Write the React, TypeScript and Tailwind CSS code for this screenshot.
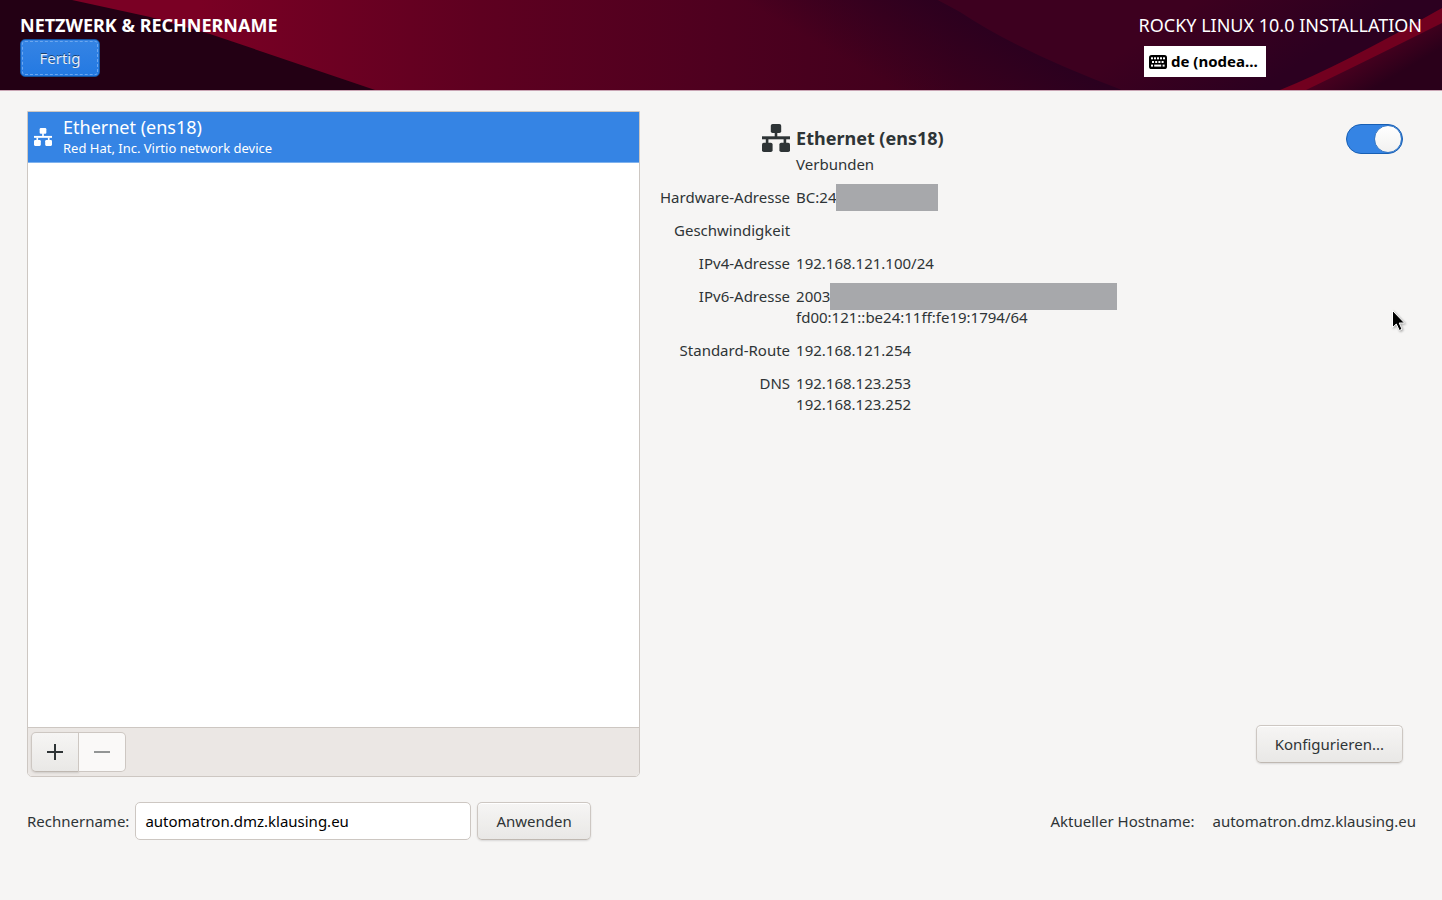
import { useState } from "react";

const buttonLook =
  "h-[38px] rounded-[5px] border border-[#cdc7c2] border-b-[#bfb8b1] bg-gradient-to-b from-[#f6f5f4] to-[#e9e8e6] px-[18px] shadow-[inset_0_1px_0_white,0_1px_2px_rgba(0,0,0,0.12)]";

function WiredIcon({ className }: { className: string }) {
  return (
    <svg viewBox="0 0 28 28" fill="currentColor" className={className} aria-hidden="true">
      <rect x="8.8" y="0" width="10.4" height="9" rx="1.8" />
      <rect x="12.7" y="8" width="2.6" height="6" />
      <rect x="0" y="12.3" width="28" height="3" />
      <rect x="3.8" y="15" width="2.6" height="5" />
      <rect x="21.6" y="15" width="2.6" height="5" />
      <rect x="0" y="18.8" width="10.6" height="9.2" rx="1.8" />
      <rect x="17.4" y="18.8" width="10.6" height="9.2" rx="1.8" />
    </svg>
  );
}

function KeyboardIcon() {
  return (
    <svg viewBox="0 0 18 14" className="h-[14px] w-[18px] shrink-0" aria-hidden="true">
      <rect width="18" height="14" rx="2.6" fill="#000" />
      <g fill="#fff">
        <rect x="2" y="2.3" width="2" height="2" />
        <rect x="5" y="2.3" width="2" height="2" />
        <rect x="8" y="2.3" width="2" height="2" />
        <rect x="11" y="2.3" width="2" height="2" />
        <rect x="14" y="2.3" width="2" height="2" />
        <rect x="3" y="6" width="2" height="2" />
        <rect x="6.2" y="6" width="2" height="2" />
        <rect x="9.4" y="6" width="2" height="2" />
        <rect x="12.6" y="6" width="2" height="2" />
        <rect x="2" y="9.6" width="2" height="2" />
        <rect x="5.2" y="9.6" width="7" height="2" />
        <rect x="13.6" y="9.6" width="2" height="2" />
      </g>
    </svg>
  );
}

function HeaderArt() {
  return (
    <svg
      viewBox="0 0 1442 90"
      preserveAspectRatio="none"
      className="absolute inset-0 h-full w-full"
      aria-hidden="true"
    >
      <defs>
        <linearGradient id="base" gradientUnits="userSpaceOnUse" x1="200" y1="0" x2="960" y2="0">
          <stop offset="0" stopColor="#7a0024" />
          <stop offset="0.37" stopColor="#5e0020" />
          <stop offset="0.7" stopColor="#4d001f" />
          <stop offset="1" stopColor="#3e001c" />
        </linearGradient>
        <linearGradient id="shade" gradientUnits="userSpaceOnUse" x1="880" y1="80" x2="935" y2="-15">
          <stop offset="0" stopColor="#2a001f" stopOpacity="0" />
          <stop offset="1" stopColor="#2a001f" />
        </linearGradient>
        <linearGradient id="fold" gradientUnits="userSpaceOnUse" x1="1200" y1="0" x2="1260" y2="90">
          <stop offset="0" stopColor="#3d001f" />
          <stop offset="1" stopColor="#2c0020" />
        </linearGradient>
        <linearGradient id="dark" gradientUnits="userSpaceOnUse" x1="1370" y1="50" x2="1400" y2="100">
          <stop offset="0" stopColor="#4a001f" />
          <stop offset="0.6" stopColor="#2a001a" />
        </linearGradient>
      </defs>
      <rect width="1442" height="90" fill="url(#base)" />
      <path d="M700 0H938L1122 90H760Z" fill="url(#shade)" />
      <path d="M938 0H1442V90H1122Q1020 52 960 12Z" fill="url(#fold)" />
      <path d="M0 0H72L150 17L210 34L375 90H0Z" fill="#230014" />
      <path d="M1280 90Q1340 66 1442 8V90Z" fill="#72001f" />
      <path d="M1306 90Q1360 64 1442 23V90Z" fill="url(#dark)" />
    </svg>
  );
}

const details: { label: string; lines: { text: string; mask?: string }[] }[] = [
  { label: "Hardware-Adresse", lines: [{ text: "BC:24", mask: "w-[102px]" }] },
  { label: "Geschwindigkeit", lines: [] },
  { label: "IPv4-Adresse", lines: [{ text: "192.168.121.100/24" }] },
  {
    label: "IPv6-Adresse",
    lines: [
      { text: "2003", mask: "w-[287px]" },
      { text: "fd00:121::be24:11ff:fe19:1794/64" },
    ],
  },
  { label: "Standard-Route", lines: [{ text: "192.168.121.254" }] },
  { label: "DNS", lines: [{ text: "192.168.123.253" }, { text: "192.168.123.252" }] },
];

export default function App() {
  const [on, setOn] = useState(true);
  const [host, setHost] = useState("automatron.dmz.klausing.eu");

  return (
    <div className="relative flex min-h-screen flex-col bg-[#f6f5f4] font-['Noto_Sans',sans-serif] text-[15px] leading-[21px] text-[#2e3436]">
      <header className="relative flex items-start justify-between border-b border-[#c9a5b4] px-5 pt-3 pb-[13px] text-white">
        <HeaderArt />
        <div className="relative">
          <h1 className="text-[18px] leading-[27px] font-bold">NETZWERK &amp; RECHNERNAME</h1>
          <button className="flex h-[38px] w-20 rounded-[5px] border border-[#15539e] bg-gradient-to-b from-[#3584e4] to-[#2379e2] p-px text-shadow-[0_-1px_0_rgba(0,0,0,0.5)]">
            <span className="flex h-full w-full items-center justify-center rounded-[3px] border border-dashed border-[#6ba6ee] text-[#e3edf9]">
              Fertig
            </span>
          </button>
        </div>
        <div className="relative flex w-[278px] flex-col items-start gap-[7px]">
          <span className="self-end text-[18px] leading-[27px] whitespace-nowrap">
            ROCKY LINUX 10.0 INSTALLATION
          </span>
          <button className="flex h-[31px] w-[122px] items-center gap-1 bg-white pr-2 pl-[5px] font-bold text-black">
            <KeyboardIcon />
            de (nodea…
          </button>
        </div>
      </header>

      <main className="flex flex-1 flex-col pt-5 pr-[26px] pb-[60px] pl-[27px]">
        <div className="grid flex-1 grid-cols-[613fr_776fr]">
          <section className="flex flex-col overflow-hidden rounded-b-[5px] border border-[#cdc7c2] bg-white">
            <ul className="flex-1">
              <li className="flex h-[51px] items-center gap-[11px] border-b border-[#7fb2ee] bg-[#3584e4] pl-[6px] text-white">
                <WiredIcon className="h-[18px] w-[18px]" />
                <div>
                  <div className="text-[18px] leading-[23px]">Ethernet (ens18)</div>
                  <div className="text-[13px] leading-[19px]">Red Hat, Inc. Virtio network device</div>
                </div>
              </li>
            </ul>
            <div className="flex h-[49px] items-start border-t border-[#cdc7c2] bg-[#ebe7e4] px-[3px] pt-1">
              <button
                aria-label="Hinzufügen"
                className="flex h-10 w-12 items-center justify-center rounded-l-[5px] border border-[#cdc7c2] border-b-[#bfb8b1] bg-gradient-to-b from-[#f6f5f4] to-[#e9e8e6] shadow-[0_1px_2px_rgba(0,0,0,0.12)]"
              >
                <svg viewBox="0 0 16 16" className="h-4 w-4" aria-hidden="true">
                  <path d="M8 0V16M0 8H16" stroke="#2e3436" strokeWidth="2" />
                </svg>
              </button>
              <button
                aria-label="Entfernen"
                disabled
                className="flex h-10 w-[47px] items-center justify-center rounded-r-[5px] border border-l-0 border-[#cdc7c2] bg-[#faf9f8]"
              >
                <svg viewBox="0 0 16 16" className="h-4 w-4" aria-hidden="true">
                  <path d="M0 8H16" stroke="#929595" strokeWidth="2" />
                </svg>
              </button>
            </div>
          </section>

          <section className="flex flex-col justify-between pt-3 pr-[13px] pb-[14px] pl-5">
            <div className="flex items-start justify-between">
              <div className="grid grid-cols-[auto_auto] gap-x-[6px] gap-y-3">
                <WiredIcon className="mt-px h-7 w-7 justify-self-end" />
                <div>
                  <h2 className="text-[18px] leading-[31px] font-bold">Ethernet (ens18)</h2>
                  <p>Verbunden</p>
                </div>
                <dl className="contents">
                  {details.map((row) => (
                    <div key={row.label} className="contents">
                      <dt className="text-right">{row.label}</dt>
                      <dd>
                        {row.lines.map((line) => (
                          <div key={line.text} className="flex h-[21px] items-center">
                            {line.text}
                            {line.mask && <span className={`h-[27px] bg-[#a7a8ab] ${line.mask}`} />}
                          </div>
                        ))}
                      </dd>
                    </div>
                  ))}
                </dl>
              </div>
              <label
                className={`relative mt-px flex h-[30px] w-[57px] items-center rounded-full border ${
                  on ? "justify-end border-[#185fb4] bg-[#3584e4]" : "justify-start border-[#cdc7c2] bg-[#e1dedb]"
                }`}
              >
                <input
                  type="checkbox"
                  role="switch"
                  aria-label="Ethernet (ens18)"
                  checked={on}
                  onChange={(e) => setOn(e.target.checked)}
                  className="absolute inset-0 h-full w-full appearance-none"
                />
                <span
                  className={`h-7 w-7 rounded-full border bg-gradient-to-b from-white to-[#f2f1f0] ${
                    on ? "border-[#3577c4]" : "border-[#cdc7c2]"
                  }`}
                />
              </label>
            </div>
            <button className={`self-end ${buttonLook}`}>Konfigurieren...</button>
          </section>
        </div>

        <div className="mt-[25px] flex items-center justify-between">
          <form className="flex items-center gap-[6px]" onSubmit={(e) => e.preventDefault()}>
            <label htmlFor="host">Rechnername:</label>
            <input
              id="host"
              value={host}
              onChange={(e) => setHost(e.target.value)}
              className="h-[38px] w-[336px] rounded-[5px] border border-[#cdc7c2] bg-white px-[9px] text-black"
            />
            <button className={buttonLook}>Anwenden</button>
          </form>
          <p className="flex gap-[18px]">
            <span>Aktueller Hostname:</span>
            <span>automatron.dmz.klausing.eu</span>
          </p>
        </div>
      </main>

      <svg
        viewBox="0 0 16 24"
        className="pointer-events-none absolute top-[309px] right-[35px] h-6 w-4 drop-shadow-[1px_1px_1px_rgba(0,0,0,0.35)]"
        aria-hidden="true"
      >
        <path
          d="M1.5 1.5V18.5L5.3 15L8.3 21.5L11 20.2L8.2 14H13.5Z"
          fill="#000"
          stroke="#fff"
          strokeWidth="1"
        />
      </svg>
    </div>
  );
}
